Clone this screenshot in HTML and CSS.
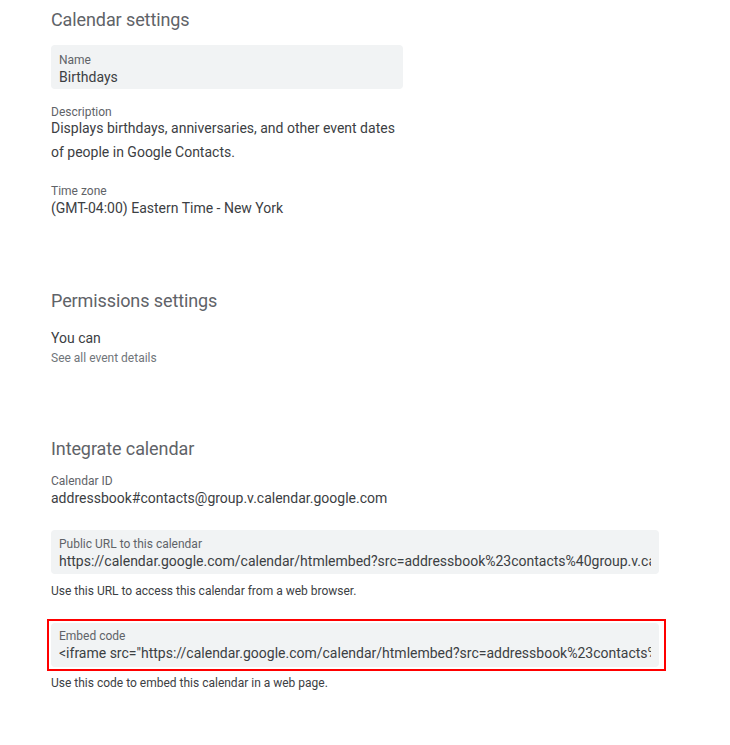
FILE: index.html
```html
<!DOCTYPE html>
<html>
<head>
<meta charset="utf-8">
<link rel="stylesheet" href="styles.css">
</head>
<body>
<main class="page">
  <section class="sec sec-cal">
    <h2 class="heading">Calendar settings</h2>
    <div class="field box name-box">
      <div class="label">Name</div>
      <div class="value">Birthdays</div>
    </div>
    <div class="field desc">
      <div class="label">Description</div>
      <div class="value value-desc">Displays birthdays, anniversaries, and other event dates<br>of people in Google Contacts.</div>
    </div>
    <div class="field tz">
      <div class="label">Time zone</div>
      <div class="value">(GMT-04:00) Eastern Time - New York</div>
    </div>
  </section>

  <section class="sec sec-perm">
    <h2 class="heading">Permissions settings</h2>
    <div class="perm">
      <div class="perm-title">You can</div>
      <div class="perm-sub">See all event details</div>
    </div>
  </section>

  <section class="sec sec-int">
    <h2 class="heading">Integrate calendar</h2>
    <div class="field calid">
      <div class="label">Calendar ID</div>
      <div class="value">addressbook#contacts@group.v.calendar.google.com</div>
    </div>
    <div class="field box wide url-box">
      <div class="label">Public URL to this calendar</div>
      <div class="value clip">https://calendar.google.com/calendar/htmlembed?src=addressbook%23contacts%40group.v.calendar.google.com&amp;ctz=America%2FNew_York</div>
    </div>
    <div class="help">Use this URL to access this calendar from a web browser.</div>
    <div class="highlight">
      <div class="field box wide embed-box">
        <div class="label">Embed code</div>
        <div class="value clip">&lt;iframe src="https://calendar.google.com/calendar/htmlembed?src=addressbook%23contacts%40group.v.calendar.google.com&amp;ctz=America%2FNew_York" style="border: 0" width="800" height="600" frameborder="0" scrolling="no"&gt;&lt;/iframe&gt;</div>
      </div>
    </div>
    <div class="help help-embed">Use this code to embed this calendar in a web page.</div>
  </section>
</main>
</body>
</html>
```
FILE: styles.css
```css
* { box-sizing: border-box; }
html, body { margin: 0; padding: 0; background: #ffffff; }
body {
  font-family: Roboto, "Liberation Sans", Arial, sans-serif;
  color: #3c4043;
  width: 730px;
  height: 745px;
  overflow: hidden;
}
.page {
  padding: 8px 0 0 51px;
  display: flex;
  flex-direction: column;
}
.heading {
  margin: 0;
  font-family: Roboto, "Liberation Sans", sans-serif;
  font-weight: 400;
  font-size: 18px;
  line-height: 24px;
  color: #5f6368;
  letter-spacing: -0.1px;
}
.label {
  font-size: 12px;
  line-height: 16px;
  color: #5f6368;
}
.value {
  font-size: 14px;
  line-height: 18px;
  color: #3c4043;
}
.box {
  background: #f1f3f4;
  border-radius: 4px;
  padding: 7px 8px 3px 8px;
  height: 44px;
}
.name-box { width: 352px; margin-top: 13px; }
.desc { margin-top: 15px; }
.value-desc { line-height: 24px; margin-top: -4px; }
.tz { margin-top: 19px; }

.sec-perm { margin-top: 72px; }
.perm { margin-top: 15px; }
.perm-title { font-size: 14px; line-height: 20px; color: #3c4043; }
.perm-sub { font-size: 12px; line-height: 20px; color: #70757a; }

.sec-int { margin-top: 69px; }
.calid { margin-top: 12px; }
.wide { width: 608px; }
.url-box { margin-top: 23px; padding-top: 6px; padding-bottom: 4px; }
.clip {
  white-space: nowrap;
  overflow: hidden;
}
.help {
  font-size: 12px;
  line-height: 16px;
  color: #3c4043;
  margin-top: 9px;
}
.highlight {
  margin-top: 20px;
  margin-left: -4px;
  width: 619px;
  border: 2px solid #ff0000;
  padding: 2px 5px 2px 2px;
}
.embed-box { padding-top: 5px; padding-bottom: 5px; }
.help-embed { margin-top: 4px; }
```
